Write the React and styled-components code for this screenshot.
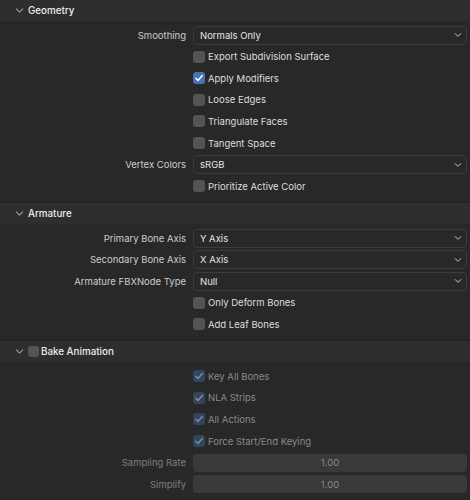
import React from "react";
import styled, { createGlobalStyle } from "styled-components";

const GlobalStyle = createGlobalStyle`
  html, body {
    margin: 0;
    padding: 0;
    background: #242424;
  }
  body {
    font-family: Inter, "Noto Sans", sans-serif;
    font-size: 9.5px;
    -webkit-font-smoothing: antialiased;
  }
`;

const Region = styled.div`
  width: 470px;
  height: 500px;
  overflow: hidden;
  display: flex;
  flex-direction: column;
  gap: 2px;
  background: #242424;
`;

const Panel = styled.section`
  background: #282828;
`;

const PanelHeader = styled.div`
  height: 21px;
  display: flex;
  align-items: center;
  padding-left: 15px;
  gap: 4px;
  background: #2e2e2e;
  color: #ededed;
  font-size: 9.8px;
  font-weight: 500;
`;

const PanelBody = styled.div`
  padding: 3.5px 3px 4px 0;
  display: flex;
  flex-direction: column;
`;

const Row = styled.div`
  height: 21.55px;
  display: grid;
  grid-template-columns: 186px 1fr;
  column-gap: 7px;
  align-items: center;
`;

const Label = styled.span`
  text-align: right;
  color: ${(p) => (p.$disabled ? "#7e7e7e" : "#cccccc")};
  white-space: nowrap;
`;

const Dropdown = styled.div`
  height: 17px;
  border: 1px solid #3b3b3b;
  border-radius: 4px;
  background: #282828;
  display: flex;
  align-items: center;
  justify-content: space-between;
  padding: 0 4px 0 6px;
  color: #e4e4e4;
`;

const NumberField = styled.div`
  height: 18px;
  border-radius: 4px;
  background: ${(p) => (p.$disabled ? "#393939" : "#545454")};
  display: flex;
  align-items: center;
  justify-content: center;
  color: ${(p) => (p.$disabled ? "#888888" : "#e2e2e2")};
`;

const CheckLine = styled.label`
  display: flex;
  align-items: center;
  gap: 3px;
  color: ${(p) => (p.$disabled ? "#8a8a8a" : "#dedede")};
  white-space: nowrap;
`;

const Box = styled.span`
  width: 12px;
  height: 12px;
  border-radius: 3px;
  flex: none;
  display: flex;
  align-items: center;
  justify-content: center;
  background: ${(p) =>
    p.$checked ? (p.$disabled ? "#33445d" : "#4772b3") : "#545454"};
`;

const HeaderBox = styled(Box)`
  width: 11px;
  height: 11px;
  margin-left: 0;
  margin-right: -2px;
`;

const Chevron = ({ color = "#9a9a9a", size = 9 }) => (
  <svg width={size} height={size} viewBox="0 0 10 10">
    <path
      d="M1.5 3.2 L5 6.7 L8.5 3.2"
      fill="none"
      stroke={color}
      strokeWidth="1.2"
      strokeLinecap="round"
      strokeLinejoin="round"
    />
  </svg>
);

const Check = ({ disabled }) => (
  <svg width="10" height="10" viewBox="0 0 10 10">
    <path
      d="M1.8 5.2 L4 7.4 L8.3 2.6"
      fill="none"
      stroke={disabled ? "#7f8ba0" : "#ffffff"}
      strokeWidth="1.5"
      strokeLinecap="round"
      strokeLinejoin="round"
    />
  </svg>
);

function Checkbox({ checked, disabled, children }) {
  return (
    <Row>
      <span />
      <CheckLine $disabled={disabled}>
        <Box $checked={checked} $disabled={disabled}>
          {checked && <Check disabled={disabled} />}
        </Box>
        {children}
      </CheckLine>
    </Row>
  );
}

function Select({ label, value }) {
  return (
    <Row>
      <Label>{label}</Label>
      <Dropdown>
        {value}
        <Chevron color="#d0d0d0" size={8} />
      </Dropdown>
    </Row>
  );
}

function Slider({ label, value, disabled }) {
  return (
    <Row>
      <Label $disabled={disabled}>{label}</Label>
      <NumberField $disabled={disabled}>{value}</NumberField>
    </Row>
  );
}

export default function App() {
  return (
    <>
      <GlobalStyle />
      <Region>
        <Panel>
          <PanelHeader>
            <Chevron />
            <span>Geometry</span>
          </PanelHeader>
          <PanelBody>
            <Select label="Smoothing" value="Normals Only" />
            <Checkbox>Export Subdivision Surface</Checkbox>
            <Checkbox checked>Apply Modifiers</Checkbox>
            <Checkbox>Loose Edges</Checkbox>
            <Checkbox>Triangulate Faces</Checkbox>
            <Checkbox>Tangent Space</Checkbox>
            <Select label="Vertex Colors" value="sRGB" />
            <Checkbox>Prioritize Active Color</Checkbox>
          </PanelBody>
        </Panel>
        <Panel>
          <PanelHeader>
            <Chevron />
            <span>Armature</span>
          </PanelHeader>
          <PanelBody>
            <Select label="Primary Bone Axis" value="Y Axis" />
            <Select label="Secondary Bone Axis" value="X Axis" />
            <Select label="Armature FBXNode Type" value="Null" />
            <Checkbox>Only Deform Bones</Checkbox>
            <Checkbox>Add Leaf Bones</Checkbox>
          </PanelBody>
        </Panel>
        <Panel>
          <PanelHeader>
            <Chevron />
            <HeaderBox />
            <span>Bake Animation</span>
          </PanelHeader>
          <PanelBody>
            <Checkbox checked disabled>Key All Bones</Checkbox>
            <Checkbox checked disabled>NLA Strips</Checkbox>
            <Checkbox checked disabled>All Actions</Checkbox>
            <Checkbox checked disabled>Force Start/End Keying</Checkbox>
            <Slider label="Sampling Rate" value="1.00" disabled />
            <Slider label="Simplify" value="1.00" disabled />
          </PanelBody>
        </Panel>
      </Region>
    </>
  );
}
